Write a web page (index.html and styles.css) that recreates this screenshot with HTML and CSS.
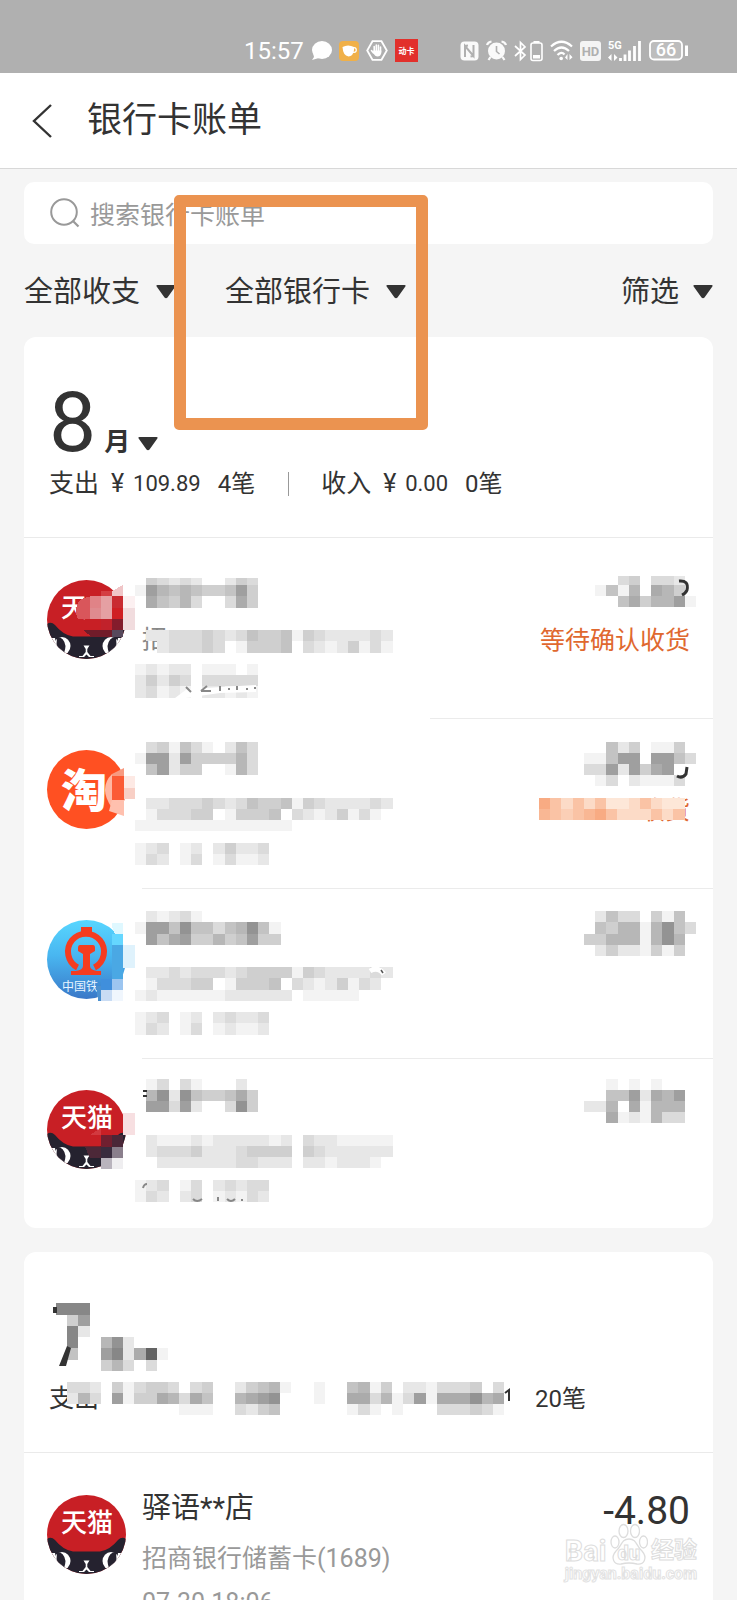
FILE: index.html
```html
<!DOCTYPE html>
<html lang="zh-CN">
<head>
<meta charset="utf-8">
<meta name="viewport" content="width=device-width, initial-scale=1">
<title>银行卡账单</title>
<link rel="stylesheet" href="styles.css">
</head>
<body>
<svg class="defs" aria-hidden="true">
  <defs>
    <clipPath id="disc"><circle cx="39.5" cy="39.5" r="39.5"/></clipPath>
    <linearGradient id="sky" x1="0" y1="0" x2="0" y2="1"><stop offset="0" stop-color="#58d6ff"/><stop offset="0.45" stop-color="#49b6f0"/><stop offset="1" stop-color="#3a78c8"/></linearGradient>
    <symbol id="tmall" viewBox="0 0 79 79">
      <g clip-path="url(#disc)">
        <rect width="79" height="79" fill="#c81f25"/>
        <path d="M0 44Q4 41 8 45Q16 55 26 56.500H53Q63 55 71 45Q75 41 79 44V79H0Z" fill="#25222f"/>
        <path d="M0 58H8Q9 70 24 76V79H0ZM79 58H71Q70 70 55 76V79H79Z" fill="#fff"/>
        <ellipse cx="15" cy="66" rx="8.500" ry="9" fill="#fff"/><ellipse cx="64" cy="66" rx="8.500" ry="9" fill="#fff"/>
        <path d="M10 57Q17 57 18.500 66Q18 73 15 76Q8 72 10 57ZM69 57Q62 57 60.500 66Q61 73 64 76Q71 72 69 57Z" fill="#25222f"/>
        <path d="M36.500 65.500H42.500L40.300 69V72L43.500 76H47V77H42L39.500 74.500L37 77H32V76H35.500L38.700 72V69Z" fill="#fff"/>
      </g>
    </symbol>
  </defs>
</svg>
<div class="screen">
  <div class="status">
    <div class="status-group">
      <span class="clock">15:57</span>
      <svg width="21" height="21" viewBox="0 0 21 21"><ellipse cx="11" cy="10" rx="10" ry="9" fill="#fff"/><path d="M2 13L3 17L1 20L8 18Z" fill="#fff"/></svg>
      <svg width="20" height="21" viewBox="0 0 20 21"><rect width="20" height="20" y="1" rx="4" fill="#f0b048"/><path d="M3.500 7Q9 4 15 7V10Q14 16.500 9.500 16.500Q4 15.500 3.500 7Z" fill="#fff"/><circle cx="15" cy="10" r="2.300" fill="none" stroke="#fff" stroke-width="1.200"/></svg>
      <svg width="22" height="21" viewBox="0 0 22 21"><path d="M6.500 1.200H15.500L20.800 10.500L15.500 19.800H6.500L1.200 10.500Z" fill="none" stroke="#fff" stroke-width="1.800"/><path d="M8.200 12V6.500M10.300 11V5M12.400 11V5.200M14.500 12V7M7.500 13L5.500 10.500" stroke="#fff" stroke-width="1.600" stroke-linecap="round"/><path d="M7.300 10.500H15.300V13Q14.500 16.500 11.500 16.500Q9 16.500 7.300 13Z" fill="#fff"/></svg>
      <svg width="23" height="23" viewBox="0 0 23 23"><rect width="23" height="23" fill="#e2302b"/><text x="11.500" y="14.500" class="badge-text">动卡</text></svg>
    </div>
    <div class="status-group">
      <svg width="19" height="20" viewBox="0 0 19 20"><rect x="0.500" y="0.500" width="18" height="19" rx="4" fill="#fafafa"/><path d="M5 16V5L13.500 15V4M5 5L8 4.500M13.500 15L10.500 15.500" fill="none" stroke="#b0b0b0" stroke-width="2"/></svg>
      <svg width="21" height="21" viewBox="0 0 21 21"><circle cx="10.500" cy="11" r="8.500" fill="#fafafa"/><path d="M1 5Q2 2 5.500 1.500M20 5Q19 2 15.500 1.500M4.500 17L2.500 20M16.500 17L18.500 20" stroke="#fafafa" stroke-width="2.200" fill="none"/><path d="M10.500 6V11.500L13.500 14" stroke="#b0b0b0" stroke-width="1.600" fill="none"/></svg>
      <svg width="29" height="22" viewBox="0 0 29 22"><path d="M1 6L11 15L6.500 19.500V2.500L11 7L1 16" fill="none" stroke="#fff" stroke-width="1.700"/><rect x="17" y="3" width="11" height="17.500" rx="2" fill="none" stroke="#fff" stroke-width="1.600"/><path d="M19.500 1H25.500V3H19.500ZM19 15H26V18.500H19Z" fill="#fff"/></svg>
      <svg width="23" height="21" viewBox="0 0 23 21"><path d="M1 6.500Q11.500 -3 22 6.500M4 11Q11.500 4 19 11M7.500 15Q11.500 11 14.500 14.500" fill="none" stroke="#fff" stroke-width="2.200"/><circle cx="11.200" cy="18.500" r="1.800" fill="#fff"/><path d="M17.500 14V20L15 17.500ZM19.500 14V20L22.500 17.200Z" fill="#fff"/></svg>
      <svg width="21" height="20" viewBox="0 0 21 20"><rect width="21" height="20" rx="3" fill="#f4f4f4"/><text x="10.500" y="15" class="hd-text">HD</text></svg>
      <svg width="34" height="22" viewBox="0 0 34 22"><text x="0" y="9" class="net-text">5G</text><path d="M3.500 14V21L0 17.500M6 21V14L9.500 17.500Z" fill="#fff"/><path d="M12.500 21V18M17 21V14.500M21.500 21V10.500M26.500 21V6M31.500 21V1" stroke="#fff" stroke-width="2.800"/></svg>
      <svg width="39" height="21" viewBox="0 0 39 21"><rect x="1" y="1" width="32" height="18.500" rx="4" fill="#bdbdbd" stroke="#fff" stroke-width="1.800"/><path d="M36 5.500H39V16H36Z" fill="#fff"/><text x="17" y="16" class="level-text">66</text></svg>
    </div>
  </div>

  <header class="bar">
    <button class="back" type="button" aria-label="返回"><svg width="22" height="36" viewBox="0 0 22 36"><path d="M19 2L2 18L19 34" fill="none" stroke="#333" stroke-width="2.400"/></svg></button>
    <h1 class="title">银行卡账单</h1>
  </header>

  <main class="content">
    <label class="search">
      <svg width="30" height="30" viewBox="0 0 30 30"><circle cx="14" cy="14" r="12.800" fill="none" stroke="#999" stroke-width="2"/><path d="M23 23L28.500 28.500" stroke="#999" stroke-width="2.200"/></svg>
      <input class="search-input" type="text" placeholder="搜索银行卡账单" aria-label="搜索银行卡账单">
    </label>

    <div class="filters">
      <button class="filter" type="button">全部收支<svg class="caret" viewBox="0 0 20 14"><path d="M1.500 0H18.500Q20.500 0 19 2L11.500 12.500Q10 14 8.500 12.500L1 2Q-0.500 0 1.500 0Z"/></svg></button>
      <button class="filter" type="button">全部银行卡<svg class="caret" viewBox="0 0 20 14"><path d="M1.500 0H18.500Q20.500 0 19 2L11.500 12.500Q10 14 8.500 12.500L1 2Q-0.500 0 1.500 0Z"/></svg><span class="marker"></span></button>
      <button class="filter filter-end" type="button">筛选<svg class="caret" viewBox="0 0 20 14"><path d="M1.500 0H18.500Q20.500 0 19 2L11.500 12.500Q10 14 8.500 12.500L1 2Q-0.500 0 1.500 0Z"/></svg></button>
    </div>

    <section class="card">
      <div class="month-head">
        <div class="month"><span class="month-num">8</span><span class="month-unit">月</span><svg class="caret" viewBox="0 0 20 14"><path d="M1.500 0H18.500Q20.500 0 19 2L11.500 12.500Q10 14 8.500 12.500L1 2Q-0.500 0 1.500 0Z"/></svg></div>
        <div class="stats"><span>支出</span><span class="money"><i class="yen">¥</i>109.89</span><span class="count">4笔</span><span class="rule"></span><span>收入</span><span class="money"><i class="yen">¥</i>0.00</span><span class="count">0笔</span></div>
      </div>
      <ul class="list">
        <li class="row row-short">
          <svg class="avatar" viewBox="0 0 88 79" role="img" aria-label="天猫">
            <use href="#tmall" width="79" height="79"/><text x="14" y="37" class="logo-text">天</text>
            <g shape-rendering="crispEdges"><path d="M31 39Q27 32 31 22Q36 17 43 17V39Z" fill="#d9565b"/><path d="M54 11H65V16H54Z" fill="#d43e43"/><path d="M65 11L76 5V16H65Z" fill="#f0c5c7"/><path d="M43 16H54V28H43Z" fill="#e08387"/><path d="M54 16H65V39H54Z" fill="#e5a0a3"/><path d="M43 28H54V39H43Z" fill="#df8b8f"/><path d="M65 16H76V28H65Z" fill="#c92b31"/><path d="M65 28H76V39H65Z" fill="#cf1f23"/><path d="M54 39H65V50H54Z" fill="#c1222b"/><path d="M65 39H76V50H65Z" fill="#841c2c"/><path d="M65 50H76V57H65Z" fill="#57495c"/><path d="M36 50H65V57H45Z" fill="#711c2a"/><path d="M76 16H88V28H76Z" fill="#fcf0f1"/><path d="M76 28H88V50H76Z" fill="#f1dcde"/></g>
          </svg>
          <div class="detail">
            <svg class="mosaic" data-cells="10,7,.4323 2..243|17,11,18656544584|28,12,.75463..374|62,11,.2233343235445143222232|73,12,..233343.14445.32124131|96,11,12122.111.1|107,11,24243.33333|118,12,23121.22121"></svg>
            <span class="peek">招</span>
            <svg class="scrap" viewBox="0 0 265 130"><path d="M40 130L52 121L121 117V124L85 125L50 130Z" fill="#fff"/><path d="M51 119L56 124M66 123L72 118M66 123H76M85 118V123M93 121H95M102 118V122M111 121H113M119 120H121" stroke="#888" stroke-width="2" fill="none"/></svg>
          </div>
          <div class="side">
            <svg class="mosaic mosaic-side" data-cells="8,9,...34.332|17,11,.151 6.764|28,11,...5746681"></svg>
            <svg class="scrap" viewBox="0 0 113 130"><path d="M95 13Q105 12 103 22Q102 25 98 27" stroke="#333" stroke-width="3" fill="none"/></svg>
            <span class="state">等待确认收货</span>
          </div>
        </li>
        <li class="row">
          <svg class="avatar" viewBox="0 0 88 79" role="img" aria-label="淘宝">
            <circle cx="39.500" cy="39.500" r="39.500" fill="#ff5022"/><text x="14" y="57" class="tao-text">淘</text>
            <g><path d="M65 24Q51 38 65 58Z" fill="#ffb7a2"/><path d="M65 24L77 18V26H65Z" fill="#f89a80"/><path d="M65 26H77V60H65Z" fill="#fb5b35"/><path d="M65 50L77 50V66L62 61Z" fill="#ffc0ae"/><path d="M77 26H88V38H77Z" fill="#fde9e4"/><path d="M77 38H88V49H77Z" fill="#f8cfc5"/></g>
          </svg>
          <div class="detail"><svg class="mosaic" data-cells="4,11,.3415310253|15,11,18828444463|26,11,.58244..163|60,11,.2233343235445143222232|71,11,.133344.14445.32124131|82,11,11111111111111|105,11,123.12.24223|116,11,132.13.13112"></svg></div>
          <div class="side">
            <svg class="mosaic mosaic-side" data-cells="4,11,..524.114|15,11,1158808853|26,11,3382847800|37,11,.13.21113"></svg>
            <svg class="scrap" viewBox="0 0 113 130"><path d="M93 38Q98 41 102 36L103 29" stroke="#333" stroke-width="3" fill="none"/></svg>
            <span class="state">收货</span>
            <svg class="mosaic mosaic-state" data-tone="warm" data-cells="60,11,7535352235322|71,11,6545675333535"></svg>
          </div>
        </li>
        <li class="row">
          <svg class="avatar" viewBox="0 0 88 79" role="img" aria-label="中国铁路">
            <circle cx="39.500" cy="39.500" r="39.500" fill="url(#sky)"/>
            <path d="M30.500 47.500A18 18 0 1 1 47.500 47.500" fill="none" stroke="#f53c20" stroke-width="6"/>
            <path d="M34 7H45V12H34ZM33 25H46Q48 25 48 28V31L43 34V46Q43 50 50 51H54V55H24V51H29Q36 50 36 46V34L31 31V28Q31 25 33 25Z" fill="#f53c20"/>
            <text x="15" y="71" class="rail-text">中国铁</text>
            <g shape-rendering="crispEdges"><path d="M65 3H76V16H69Q65 10 65 3Z" fill="#dff8ff"/><path d="M65 14H76V25H65Z" fill="#65d7ff"/><path d="M76 25H88V48H76Z" fill="#dff2fc"/><path d="M65 25H76V59H65Z" fill="#4aa8e4"/><path d="M54 59H65V70H54Z" fill="#408fdc"/><path d="M49 66H54V81H51Z" fill="#4b90d0"/><path d="M54 70H65V81H54Z" fill="#c9dcf4"/><path d="M65 59H76V70H65Z" fill="#9cc5f0"/><path d="M65 70H76V81H65Z" fill="#f0f6fd"/></g>
          </svg>
          <div class="detail"><svg class="mosaic" data-cells="3,11,.212310|14,12,1885955356951|26,11,.857844645844|59,11,.2232333234444143222232|70,12,.133344.14445.32124132|82,11,12111111222222.11111|104,11,123.12.23223|115,12,132.13.12112"></svg>
            <svg class="scrap" viewBox="0 0 265 130"><path d="M235 63Q243 58 249 66" stroke="#fff" stroke-width="5" fill="none"/><path d="M246 62L248 65" stroke="#555" stroke-width="1.500"/></svg></div>
          <div class="side"><svg class="mosaic mosaic-side" data-cells="3,11,.2533.415|14,12,.546616953|26,11,446661696|37,11,.24221414"></svg></div>
        </li>
        <li class="row row-last">
          <svg class="avatar" viewBox="0 0 88 79" role="img" aria-label="天猫">
            <use href="#tmall" width="79" height="79"/><text x="14" y="37" class="logo-text">天猫</text>
            <g shape-rendering="crispEdges"><path d="M43 45L54 38V45Z" fill="#d2393f"/><path d="M76 23H88V45H76Z" fill="#f7dfe1"/><path d="M54 45H65V57H54Z" fill="#701f30"/><path d="M65 45H76V57H65Z" fill="#4a2738"/><path d="M38 57H54V68H43Z" fill="#4c2838"/><path d="M54 57H65V68H54Z" fill="#392c3e"/><path d="M65 57H76V68H65Z" fill="#8a7f8c"/><path d="M54 68H65V79H54Z" fill="#b9b4bd"/><path d="M65 68H76V79H65Z" fill="#efeef0"/></g>
          </svg>
          <div class="detail"><svg class="mosaic" data-cells="1,11,.13.31...2|12,11,.6929544574|23,11,.88382..394|57,11,.2111212222212.32211111|68,11,.2333422234444.43222222|79,11,..222222233222.2212221|102,11,123.13.23233|113,11,132.23.12132"></svg>
            <svg class="scrap" viewBox="0 0 265 130"><path d="M8 13H12M8 18H12" stroke="#333" stroke-width="1.800"/><path d="M8 110Q9 106 12 106M58 121Q62 125 67 121M83 119V123M92 121Q96 125 100 121M106 122H108" stroke="#888" stroke-width="2" fill="none"/></svg></div>
          <div class="side"><svg class="mosaic mosaic-side" data-cells="1,11,..1.1.1|12,11,..5582768|23,11,22607 1666|34,11,..7121633"></svg></div>
        </li>
      </ul>
    </section>

    <section class="card">
      <div class="month-head">
        <div class="month"></div>
        <div class="stats"><span>支出</span><span class="count count-late">20笔</span></div>
        <svg class="mosaic mosaic-head" data-cells="0,12,aaa|12,11,.48|23,11,.a2|34,11,.a..692|45,12,.5..8a27d1|57,11,....463.3|79,11,.332.413443.34..24561..1..5614.2213334.3|90,11,.263.814476375..6789...1..77361381777967|101,11,...........111..3245......131.1...333431"></svg>
        <svg class="scrap scrap-head" viewBox="0 0 540 110"><path d="M4 4H8V10H4ZM18 43L22 45L17 63H10Z" fill="#333"/><path d="M456 90L460 87V98" fill="none" stroke="#333" stroke-width="2"/></svg>
      </div>
      <ul class="list">
        <li class="row">
          <svg class="avatar" viewBox="0 0 88 79" role="img" aria-label="天猫"><use href="#tmall" width="79" height="79"/><text x="14" y="37" class="logo-text">天猫</text></svg>
          <div class="detail detail-text">
            <div class="shop">驿语**店</div>
            <div class="card-no">招商银行储蓄卡(1689)</div>
            <div class="date">07-30 18:06</div>
          </div>
          <div class="side"><span class="amount">-4.80</span></div>
        </li>
      </ul>
    </section>
  </main>

  <div class="watermark">
    <div class="wm-top"><span>Bai</span><span class="wm-paw"><svg width="38" height="44" viewBox="0 0 38 44"><g fill="#fff" stroke="#ddd" stroke-width="1.300"><ellipse cx="5" cy="20" rx="4" ry="6"/><ellipse cx="13.500" cy="9" rx="4.500" ry="6.500"/><ellipse cx="25" cy="9" rx="4.500" ry="6.500"/><ellipse cx="33.500" cy="20" rx="4" ry="6"/><path d="M19 17C27 17 26 24 32 29C38 36 34 43 27 42Q19 40 11 42C4 43 0 36 6 29C12 24 11 17 19 17Z"/></g></svg><b class="wm-du">du</b></span><span>经验</span></div>
    <div class="wm-url">jingyan.baidu.com</div>
  </div>
</div>
<script src="mosaic.js"></script>
</body>
</html>
```
FILE: styles.css
```css
* { box-sizing: border-box; }
body {
  margin: 0;
  background: #f5f5f5;
  color: #333;
  font-family: Roboto, "Noto Sans CJK SC", sans-serif;
}
button { border: 0; padding: 0; background: none; color: inherit; font: inherit; }
svg { display: block; flex: none; }
.defs { position: absolute; width: 0; height: 0; }
.screen { position: relative; height: 100vh; overflow: hidden; }

.status {
  display: flex;
  justify-content: space-between;
  align-items: center;
  height: 73px;
  padding: 28px 49px 0 244px;
  background: #b0b0b0;
}
.status-group { display: flex; align-items: center; gap: 7px; }
.clock { color: #fff; font-size: 24px; line-height: 24px; }
.badge-text { font: 700 8px "Noto Sans CJK SC", sans-serif; fill: #fff; text-anchor: middle; }
.hd-text { font: 700 13px Roboto, sans-serif; fill: #b0b0b0; text-anchor: middle; }
.net-text { font: 700 11px Roboto, sans-serif; fill: #fff; }
.level-text { font: 500 18px Roboto, sans-serif; fill: #fff; text-anchor: middle; }

.bar {
  display: flex;
  align-items: center;
  gap: 33px;
  height: 96px;
  padding: 0 32px;
  background: #fff;
  border-bottom: 1px solid #d8d8d8;
}
.title { margin: 0; font-size: 35px; font-weight: 400; line-height: 48px; }

.content { padding: 13px 24px 0; }
.search {
  display: flex;
  align-items: center;
  gap: 10px;
  height: 62px;
  padding: 0 26px;
  border-radius: 10px;
  background: #fff;
}
.search-input {
  flex: 1;
  min-width: 0;
  border: 0;
  padding: 0;
  outline: 0;
  background: none;
  font: 25px/36px "Noto Sans CJK SC", sans-serif;
}
.search-input::placeholder { color: #999; opacity: 1; }

.filters { display: flex; align-items: center; gap: 49px; height: 93px; padding-top: 2px; }
.filter {
  position: relative;
  display: flex;
  align-items: center;
  gap: 16px;
  font-size: 29px;
  line-height: 40px;
}
.filter-end { margin-left: auto; gap: 14px; }
.caret { width: 20px; height: 14px; fill: #333; }
.marker {
  position: absolute;
  z-index: 2;
  top: -77px;
  bottom: -118px;
  left: -51px;
  right: -22px;
  border: 12px solid #eb9350;
  border-radius: 5px;
}

.card { margin-bottom: 24px; border-radius: 12px; background: #fff; }
.month-head {
  position: relative;
  height: 201px;
  padding: 48px 25px 0;
  border-bottom: 1px solid #eaeaea;
}
.month { display: flex; align-items: baseline; gap: 8px; height: 81px; }
.month-num { font-size: 84px; line-height: 76px; }
.month-unit { font-size: 26px; font-weight: 700; line-height: 36px; }
.stats { display: flex; align-items: center; height: 36px; font-size: 25px; line-height: 36px; white-space: pre; }
.money { display: flex; margin-left: 12px; font-size: 22px; }
.yen { width: 22px; font-size: 25px; font-style: normal; }
.count { margin-left: 17px; font-size: 24px; }
.count-late { margin-left: 436px; }
.rule { width: 1px; height: 24px; margin: 0 32px 0 33px; background: #999; }

.list { margin: 0; padding: 11px 0 0; list-style: none; }
.row {
  display: flex;
  height: 170px;
  padding: 19px 16px 0 23px;
  background: linear-gradient(#ebebeb, #ebebeb) no-repeat right bottom / calc(100% - 118px) 1px;
}
.row-short { background-size: calc(100% - 406px) 1px; }
.row-last { height: 169px; background: none; }
.avatar { width: 88px; height: 79px; margin-top: 12px; overflow: visible; }
.logo-text { font: 500 26px "Noto Sans CJK SC", sans-serif; fill: #fff; }
.tao-text { font: 900 46px "Noto Sans CJK SC", sans-serif; fill: #fff; }
.rail-text { font: 12px "Noto Sans CJK SC", sans-serif; fill: #e8f4ff; }

.detail { position: relative; z-index: 0; flex: 1; min-width: 0; }
.mosaic { position: relative; width: 265px; height: 130px; overflow: visible; }
.mosaic-side { width: 113px; }
.mosaic-state { position: absolute; top: 0; right: 12px; width: 146px; }
.scrap { position: absolute; top: 0; left: 0; width: 265px; height: 130px; }
.side { position: relative; display: flex; justify-content: flex-end; }
.side .scrap { left: auto; right: 0; width: 113px; }
.peek {
  position: absolute;
  top: 54px;
  left: 7px;
  z-index: -1;
  color: #888;
  font-size: 25px;
  line-height: 36px;
}
.state {
  position: absolute;
  top: 55px;
  right: 7px;
  color: #e0682f;
  font-size: 25px;
  line-height: 36px;
  white-space: nowrap;
}
.mosaic-head { position: absolute; top: 51px; left: 32px; width: 460px; height: 113px; }
.scrap-head { top: 51px; left: 25px; width: 540px; height: 110px; }

.detail-text { padding: 0 0 0 7px; }
.shop { font-size: 29px; line-height: 50px; }
.card-no { color: #999; font-size: 25px; line-height: 52px; }
.date { color: #999; font-size: 25px; line-height: 36px; }
.amount { margin-right: 7px; font-size: 39px; line-height: 56px; }

.watermark {
  position: absolute;
  right: 40px;
  bottom: 18px;
  color: #fff;
  font-weight: 700;
  -webkit-text-stroke: 1px #ddd;
}
.wm-top { display: flex; align-items: flex-end; justify-content: space-between; font-size: 23px; line-height: 30px; }
.wm-top > span:first-child { font-size: 29px; }
.wm-paw { position: relative; }
.wm-du { position: absolute; left: 0; right: 0; bottom: 0; text-align: center; font-size: 20px; line-height: 26px; }
.wm-url { font-size: 16px; line-height: 16px; -webkit-text-stroke: 1px #e2e2e2; }
```
FILE: mosaic.js
```js
// Draws the privacy mosaic: each "y,height,cells" group is one strip of tiles,
// a hex digit per tile (0 is white, f is darkest), "." leaves a gap.
const TILE = 11.2;
const NS = "http://www.w3.org/2000/svg";

function shade(level, tone) {
  if (tone === "warm") {
    return `rgb(${255 - level}, ${255 - level * 12}, ${250 - level * 17})`;
  }
  const v = 255 - level * 12;
  return `rgb(${v}, ${v}, ${v})`;
}

document.querySelectorAll("[data-cells]").forEach((svg) => {
  svg.setAttribute("shape-rendering", "crispEdges");
  svg.setAttribute("aria-hidden", "true");
  svg.dataset.cells.split("|").forEach((strip) => {
    const [y, height, cells] = strip.split(",");
    [...cells.replace(/ /g, "")].forEach((c, i) => {
      if (c === ".") return;
      const tile = document.createElementNS(NS, "rect");
      tile.setAttribute("x", Math.round(i * TILE));
      tile.setAttribute("y", y);
      tile.setAttribute("width", Math.round((i + 1) * TILE) - Math.round(i * TILE));
      tile.setAttribute("height", height);
      tile.setAttribute("fill", shade(parseInt(c, 16), svg.dataset.tone));
      svg.append(tile);
    });
  });
});
```
